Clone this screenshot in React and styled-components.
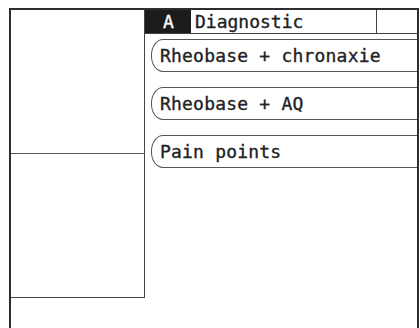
import styled, { createGlobalStyle } from "styled-components";

const GlobalStyle = createGlobalStyle`
    html, body {
        margin: 0;
        padding: 0;
        background: #fff;
    }
    body {
        font-family: "DejaVu Sans Mono", "Liberation Mono", monospace;
        color: #222;
        -webkit-text-stroke: 0.35px currentColor;
    }
`;

const items = ["Rheobase + chronaxie", "Rheobase + AQ", "Pain points"];

const App = () => {
    return (
        <>
            <GlobalStyle />
            <Screen>
                <SidePanel>
                    <SideTop />
                    <SideBottom />
                </SidePanel>

                <Main>
                    <Header>
                        <Badge>A</Badge>
                        <Title>Diagnostic</Title>
                        <Spare />
                    </Header>

                    <Menu>
                        {items.map((item) => (
                            <MenuButton key={item}>{item}</MenuButton>
                        ))}
                    </Menu>
                </Main>
            </Screen>
        </>
    );
};

export default App;

// ======================= Styled Components =======================

const Screen = styled.div`
    margin: 8px 0 0 9px;
    width: 406px;
    height: 318px;
    border: 2px solid #2e2e2e;
    border-bottom: none;
    display: flex;
    align-items: flex-start;
`;

const SidePanel = styled.div`
    width: 133px;
    height: 287px;
    border-right: 1px solid #444;
    border-bottom: 1px solid #444;
    display: flex;
    flex-direction: column;
`;

const SideTop = styled.div`
    height: 143px;
    border-bottom: 1px solid #555;
`;

const SideBottom = styled.div`
    flex: 1;
`;

const Main = styled.div`
    flex: 1;
    display: flex;
    flex-direction: column;
`;

const Header = styled.div`
    height: 23px;
    border-bottom: 1px solid #444;
    display: flex;
    font-size: 18px;
    line-height: 23px;
`;

const Badge = styled.div`
    width: 46px;
    background: #1c1c1c;
    color: #fff;
    padding-left: 18px;
    box-sizing: border-box;
`;

const Title = styled.div`
    width: 186px;
    border-right: 1px solid #444;
    padding-left: 4px;
    box-sizing: border-box;
`;

const Spare = styled.div`
    flex: 1;
`;

const Menu = styled.div`
    display: flex;
    flex-direction: column;
    gap: 15px;
    padding: 5px 0 0 6px;
`;

const MenuButton = styled.div`
    height: 31px;
    border: 1px solid #555;
    border-right: none;
    border-radius: 12px 0 0 12px / 16px 0 0 16px;
    padding-left: 8px;
    font-size: 18px;
    line-height: 31px;
    letter-spacing: 0.2px;
    color: #222;
    white-space: nowrap;
`;
